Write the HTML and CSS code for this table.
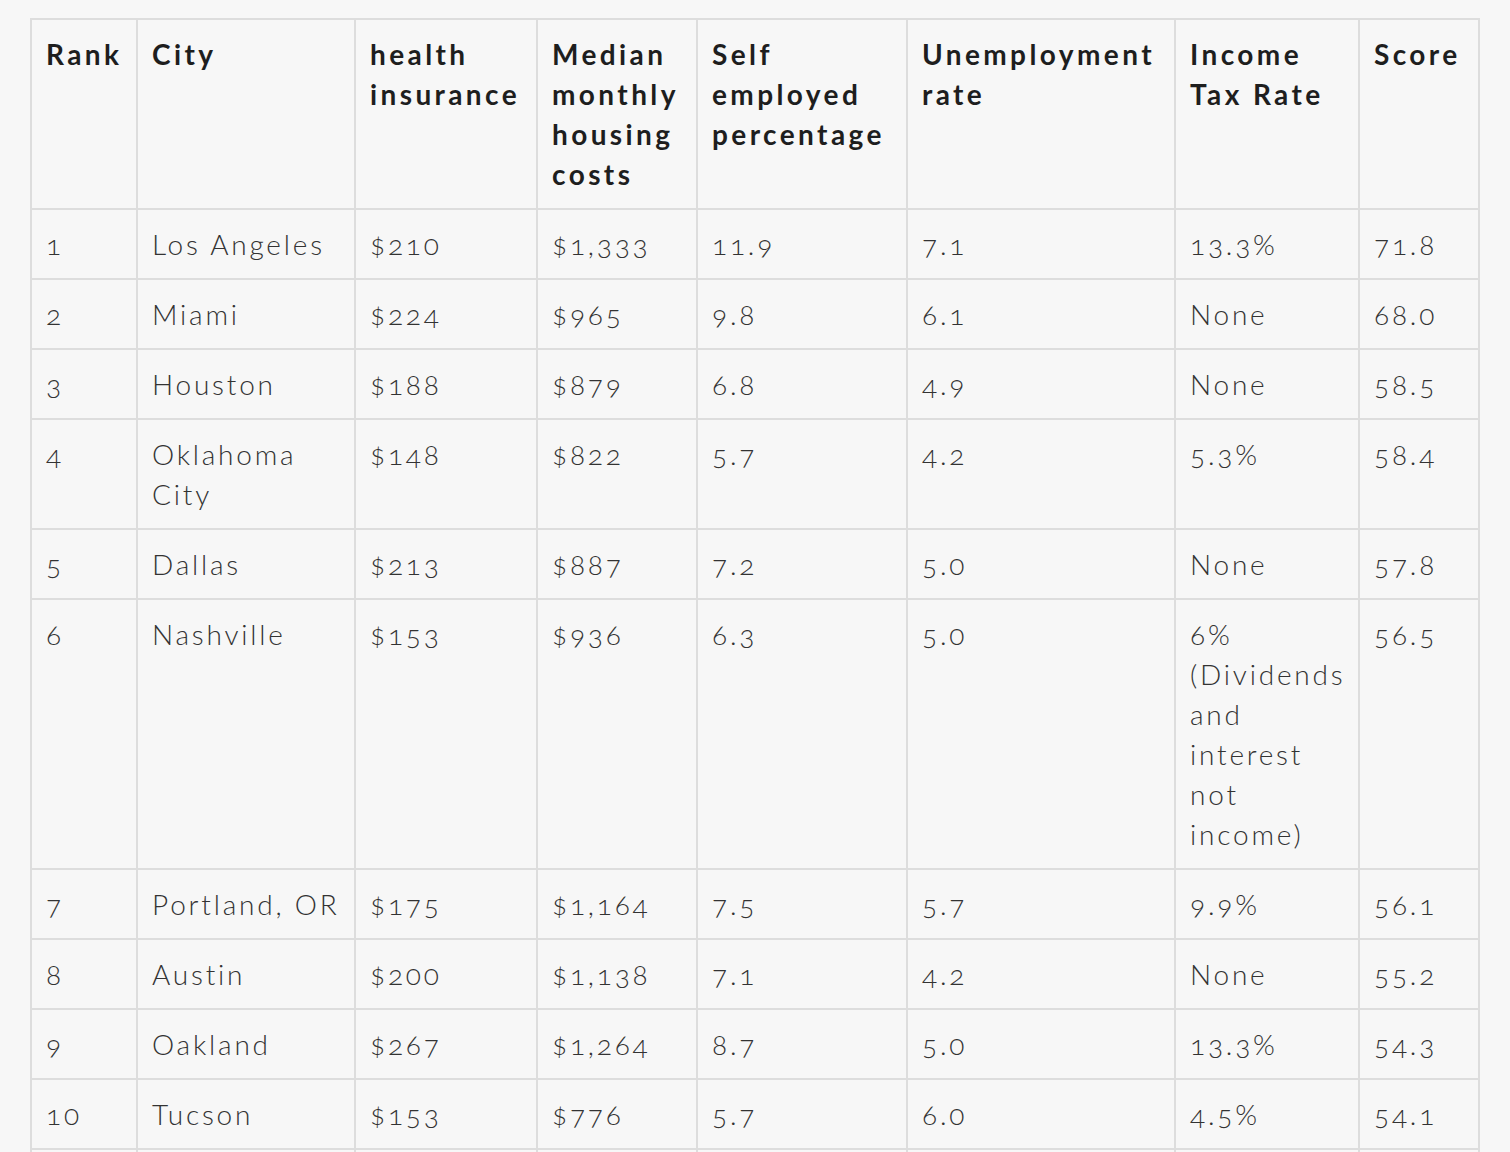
FILE: index.html
```html
<!DOCTYPE html>
<html lang="en">
<head>
<meta charset="utf-8">
<title>Cities</title>
<link rel="stylesheet" href="styles.css">
</head>
<body>
<table class="data">
  <colgroup>
    <col class="c-rank"><col class="c-city"><col class="c-health"><col class="c-housing"><col class="c-self"><col class="c-unemp"><col class="c-tax"><col class="c-score">
  </colgroup>
  <thead>
    <tr>
      <th>Rank</th><th>City</th><th>health insurance</th><th>Median monthly housing costs</th><th>Self employed percentage</th><th>Unemployment rate</th><th>Income Tax Rate</th><th>Score</th>
    </tr>
  </thead>
  <tbody>
    <tr><td>1</td><td>Los Angeles</td><td>$210</td><td>$1,333</td><td>11.9</td><td>7.1</td><td>13.3%</td><td>71.8</td></tr>
    <tr><td>2</td><td>Miami</td><td>$224</td><td>$965</td><td>9.8</td><td>6.1</td><td>None</td><td>68.0</td></tr>
    <tr><td>3</td><td>Houston</td><td>$188</td><td>$879</td><td>6.8</td><td>4.9</td><td>None</td><td>58.5</td></tr>
    <tr><td>4</td><td>Oklahoma City</td><td>$148</td><td>$822</td><td>5.7</td><td>4.2</td><td>5.3%</td><td>58.4</td></tr>
    <tr><td>5</td><td>Dallas</td><td>$213</td><td>$887</td><td>7.2</td><td>5.0</td><td>None</td><td>57.8</td></tr>
    <tr><td>6</td><td>Nashville</td><td>$153</td><td>$936</td><td>6.3</td><td>5.0</td><td>6% (Dividends and interest not income)</td><td>56.5</td></tr>
    <tr><td>7</td><td>Portland, OR</td><td>$175</td><td>$1,164</td><td>7.5</td><td>5.7</td><td>9.9%</td><td>56.1</td></tr>
    <tr><td>8</td><td>Austin</td><td>$200</td><td>$1,138</td><td>7.1</td><td>4.2</td><td>None</td><td>55.2</td></tr>
    <tr><td>9</td><td>Oakland</td><td>$267</td><td>$1,264</td><td>8.7</td><td>5.0</td><td>13.3%</td><td>54.3</td></tr>
    <tr><td>10</td><td>Tucson</td><td>$153</td><td>$776</td><td>5.7</td><td>6.0</td><td>4.5%</td><td>54.1</td></tr>
    <tr><td>&nbsp;</td><td>&nbsp;</td><td>&nbsp;</td><td>&nbsp;</td><td>&nbsp;</td><td>&nbsp;</td><td>&nbsp;</td><td>&nbsp;</td></tr>
  </tbody>
</table>
</body>
</html>
```

FILE: styles.css
```css
html, body {
  margin: 0;
  background: #f7f7f7;
}
body {
  padding: 18px 30px 0 30px;
  font-family: "Lato", "Open Sans", "DejaVu Sans", sans-serif;
  color: #333333;
}
.data {
  border-collapse: collapse;
  table-layout: fixed;
  width: 1448px;
  font-size: 28px;
  line-height: 40px;
  letter-spacing: 2.8px;
  font-variant-numeric: oldstyle-nums;
}
.c-rank { width: 106px; }
.c-city { width: 218px; }
.c-health { width: 182px; }
.c-housing { width: 160px; }
.c-self { width: 210px; }
.c-unemp { width: 268px; }
.c-tax { width: 184px; }
.c-score { width: 120px; }
.data th, .data td {
  border: 2px solid #dddddd;
  padding: 14px 14px 14px 14px;
  text-align: left;
  vertical-align: top;
}
.data th {
  font-weight: 700;
  color: #1e1e1e;
  letter-spacing: 3.4px;
}
.data td {
  font-weight: 300;
}
```
